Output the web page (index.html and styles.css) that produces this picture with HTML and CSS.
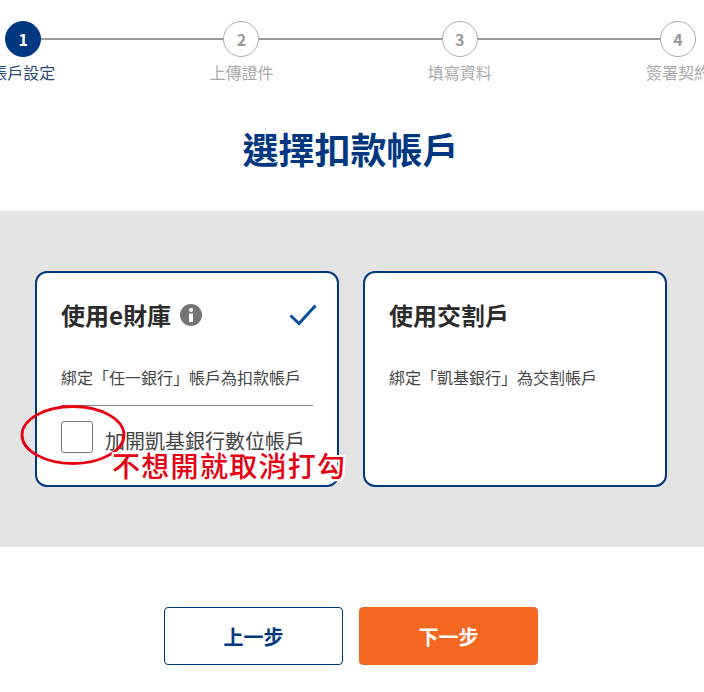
FILE: index.html
```html
<!DOCTYPE html>
<html lang="zh-Hant">
<head>
    <meta charset="UTF-8">
    <meta name="viewport" content="width=device-width, initial-scale=1.0">
    <title>選擇扣款帳戶</title>
    <link rel="stylesheet" href="styles.css">
</head>
<body>
    <ol class="stepper">
        <li class="step active"><span class="step-num">1</span><span class="step-label">帳戶設定</span></li>
        <li class="step"><span class="step-num">2</span><span class="step-label">上傳證件</span></li>
        <li class="step"><span class="step-num">3</span><span class="step-label">填寫資料</span></li>
        <li class="step"><span class="step-num">4</span><span class="step-label">簽署契約</span></li>
    </ol>

    <h1 class="page-title">選擇扣款帳戶</h1>

    <section class="band">
        <div class="card">
            <div class="card-head">
                <h2 class="card-title">使用e財庫</h2>
                <svg class="info-icon" viewBox="0 0 22 22" width="22" height="22">
                    <circle cx="11" cy="11" r="11" fill="#757575"/>
                    <circle cx="11" cy="6" r="2" fill="#fff"/>
                    <rect x="9" y="9.5" width="4" height="8.5" fill="#fff"/>
                </svg>
                <svg class="check-icon" viewBox="0 0 28 22" width="28" height="22">
                    <path d="M1.5 11.5 L10 19.5 L26.5 1.5" fill="none" stroke="#0b4ea2" stroke-width="3"/>
                </svg>
            </div>
            <p class="card-desc">綁定「任一銀行」帳戶為扣款帳戶</p>
            <div class="card-divider"></div>
            <label class="open-row">
                <span class="checkbox"></span>
                <span class="open-text">加開凱基銀行數位帳戶</span>
            </label>
        </div>
        <div class="card">
            <div class="card-head">
                <h2 class="card-title">使用交割戶</h2>
            </div>
            <p class="card-desc">綁定「凱基銀行」為交割帳戶</p>
        </div>

        <svg class="note-circle" viewBox="0 0 106 62" width="106" height="62">
            <ellipse cx="53" cy="31" rx="51" ry="28.5" fill="none" stroke="#e60012" stroke-width="2.8"/>
        </svg>
        <span class="note-text">不想開就取消打勾</span>
    </section>

    <div class="actions">
        <button class="btn btn-prev" type="button">上一步</button>
        <button class="btn btn-next" type="button">下一步</button>
    </div>
</body>
</html>
```

FILE: styles.css
```css
* {
    box-sizing: border-box;
}

body {
    margin: 0;
    width: 704px;
    height: 692px;
    overflow: hidden;
    background: #fff;
    color: #333;
    font-family: "Noto Sans CJK TC", "Noto Sans", sans-serif;
}

.stepper {
    display: flex;
    list-style: none;
    margin: 0 0 0 -86px;
    padding: 21px 0 0;
    width: 874px;
}

.step {
    position: relative;
    flex: 0 0 218.3px;
    display: flex;
    flex-direction: column;
    align-items: center;
}

.step::after {
    content: "";
    position: absolute;
    left: 50%;
    top: 17px;
    width: 100%;
    height: 2px;
    background: #999;
}

.step:last-child::after {
    display: none;
}

.step-num {
    position: relative;
    z-index: 1;
    width: 36px;
    height: 36px;
    border: 1px solid #aaa;
    border-radius: 50%;
    background: #fff;
    color: #999;
    font-size: 16px;
    font-weight: 700;
    line-height: 34px;
    text-align: center;
}

.step-label {
    margin-top: 3px;
    font-size: 16px;
    line-height: 24px;
    color: #aaa;
    white-space: nowrap;
}

.step.active .step-num {
    background: #003781;
    border-color: #003781;
    color: #fff;
}

.step.active .step-label {
    color: #2a4a7c;
}

.page-title {
    margin: 34px 0 0;
    padding-right: 3px;
    height: 93px;
    font-size: 36px;
    font-weight: 700;
    line-height: 60px;
    text-align: center;
    color: #003781;
}

.band {
    position: relative;
    display: flex;
    gap: 24px;
    height: 336px;
    padding: 60px 35px;
    background: #e4e4e4;
}

.card {
    flex: 0 0 304px;
    height: 216px;
    padding: 0 24px;
    background: #fff;
    border: 2px solid #003781;
    border-radius: 12px;
}

.card-head {
    display: flex;
    align-items: center;
    height: 36px;
    margin-top: 24px;
}

.card-title {
    margin: 0;
    font-size: 24px;
    font-weight: 700;
    line-height: 36px;
    color: #2b2b2b;
}

.info-icon {
    margin-left: 9px;
}

.check-icon {
    margin-left: auto;
    margin-right: -4px;
}

.card-desc {
    margin: 32px 0 0;
    font-size: 16px;
    line-height: 24px;
    color: #444;
}

.card-divider {
    height: 1px;
    margin-top: 16px;
    background: #888;
}

.open-row {
    display: flex;
    align-items: flex-start;
    margin-top: 15px;
}

.checkbox {
    flex: none;
    width: 32px;
    height: 32px;
    background: #fff;
    border: 1px solid #777;
    border-radius: 3px;
}

.open-text {
    margin: 5px 0 0 12px;
    font-size: 20px;
    line-height: 30px;
    color: #444;
    white-space: nowrap;
}

.note-circle {
    position: absolute;
    left: 20px;
    top: 193px;
}

.note-text {
    position: absolute;
    left: 112px;
    top: 233px;
    font-size: 28px;
    letter-spacing: 1.3px;
    font-weight: 500;
    line-height: 42px;
    color: #e60012;
    white-space: nowrap;
    text-shadow: -2px 0 #fff, 2px 0 #fff, 0 -2px #fff, 0 2px #fff, -2px -2px #fff, 2px 2px #fff, -2px 2px #fff, 2px -2px #fff;
}

.actions {
    display: flex;
    justify-content: center;
    gap: 16px;
    margin-top: 60px;
    padding-right: 2px;
}

.btn {
    width: 179px;
    height: 58px;
    border-radius: 4px;
    font-family: inherit;
    font-size: 20px;
    font-weight: 700;
}

.btn-prev {
    background: #fff;
    border: 1px solid #003781;
    color: #003781;
}

.btn-next {
    background: #f46721;
    border: 1px solid #f46721;
    color: #fff;
}
```
